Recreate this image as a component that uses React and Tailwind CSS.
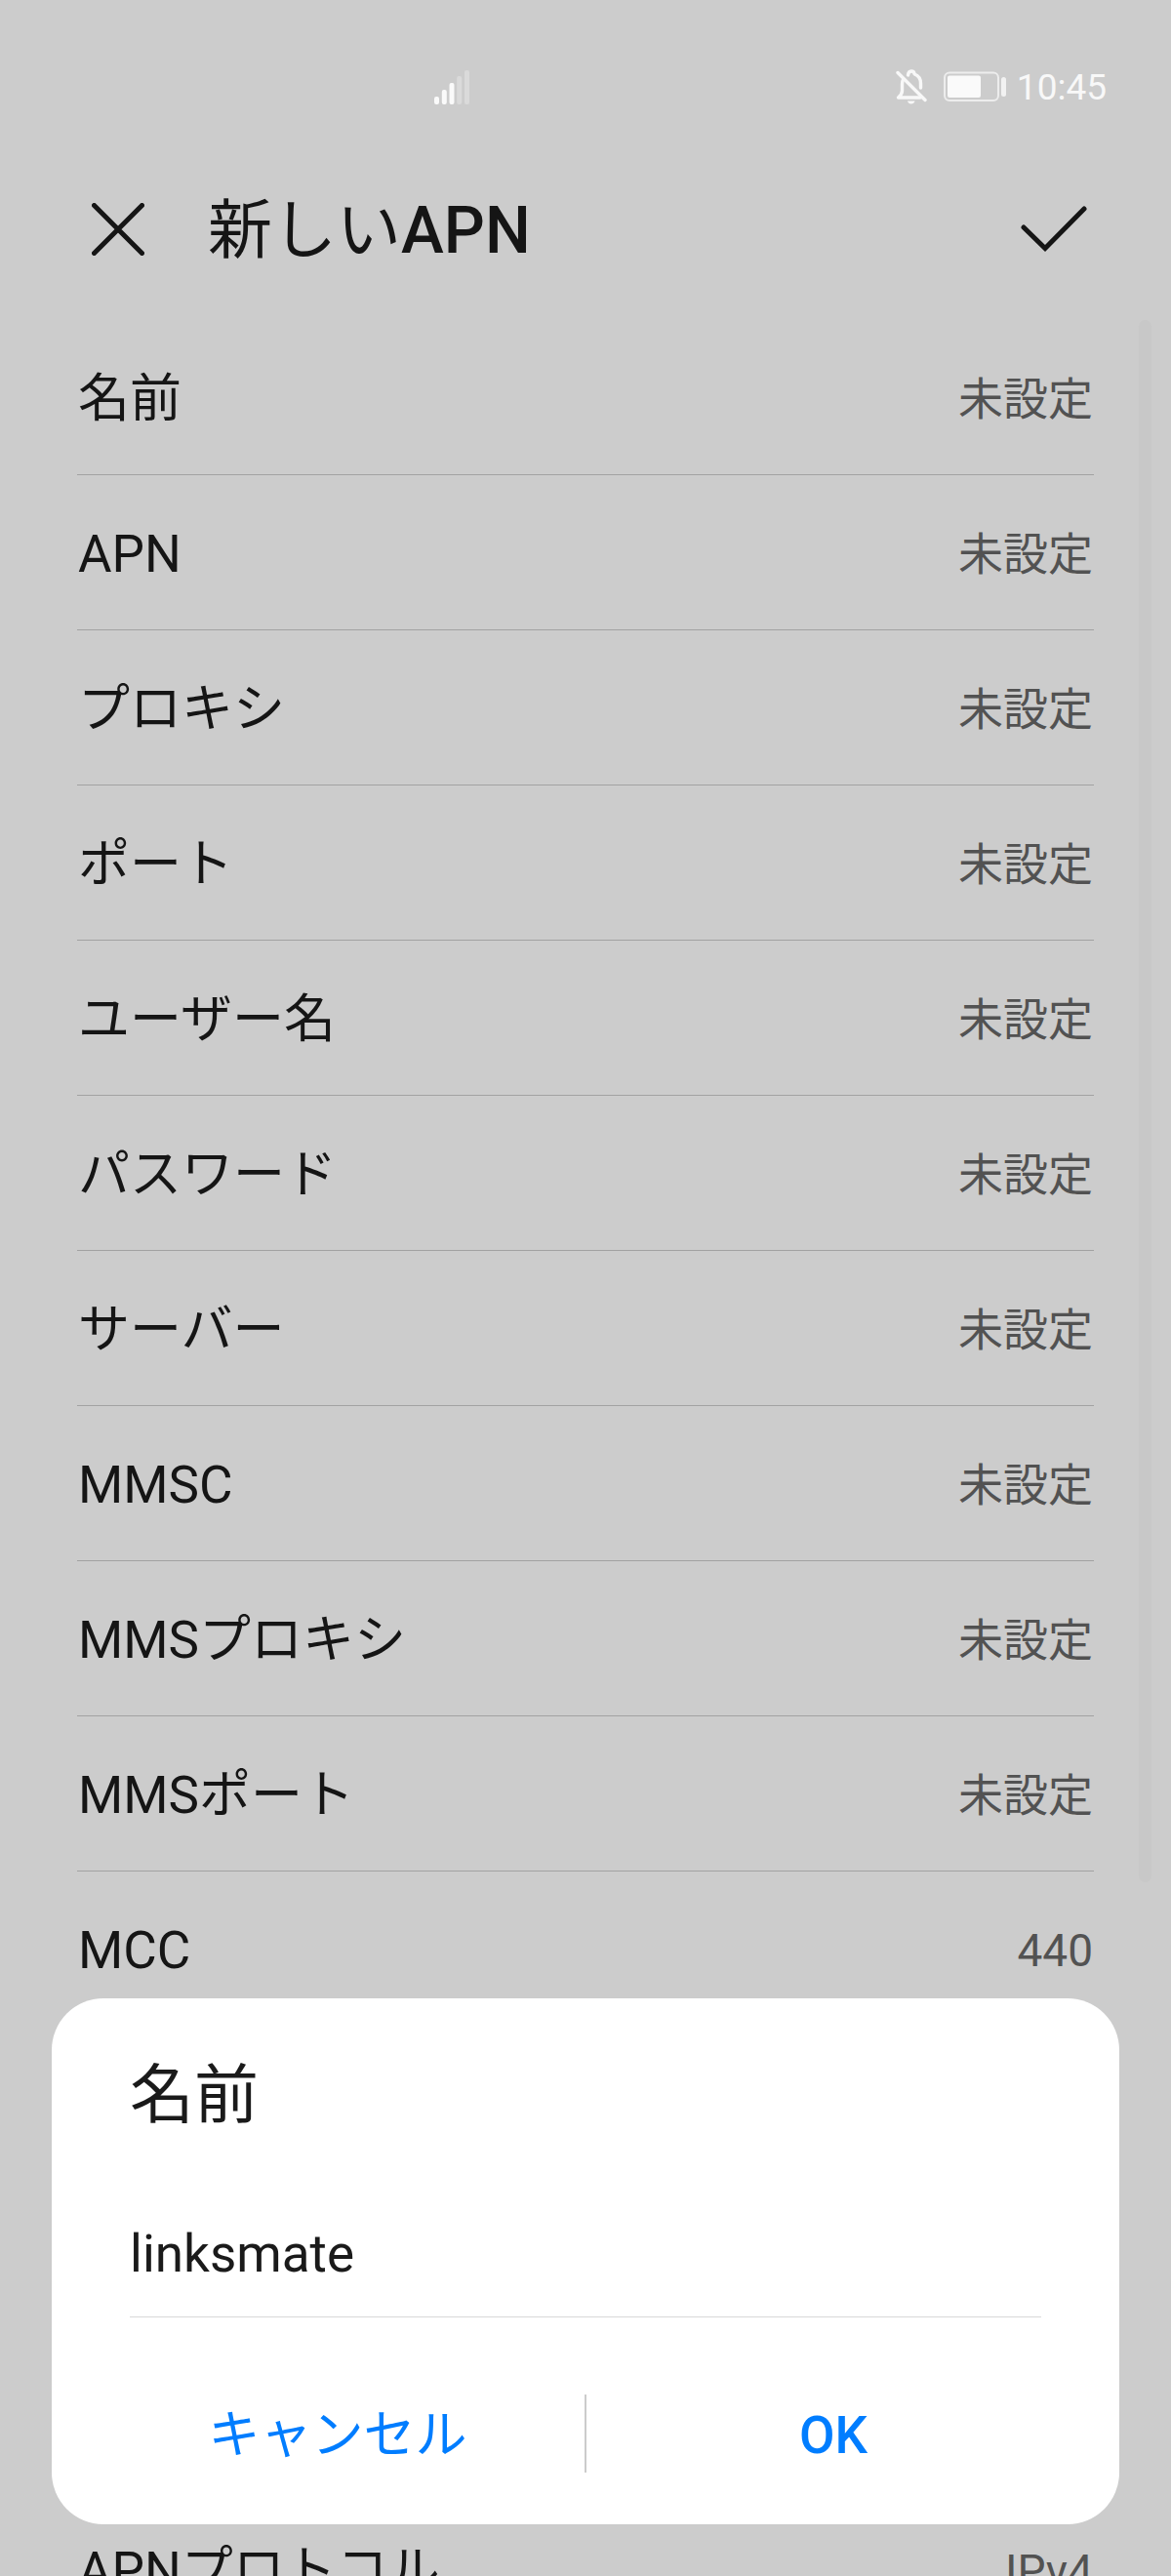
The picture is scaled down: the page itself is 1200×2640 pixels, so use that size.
// APN editor: settings list with the "name" prompt open on top.

import { useState } from "react";

const UNSET = "未設定";

const settings = [
  { label: "名前", value: UNSET },
  { label: "APN", value: UNSET },
  { label: "プロキシ", value: UNSET },
  { label: "ポート", value: UNSET },
  { label: "ユーザー名", value: UNSET },
  { label: "パスワード", value: UNSET },
  { label: "サーバー", value: UNSET },
  { label: "MMSC", value: UNSET },
  { label: "MMSプロキシ", value: UNSET },
  { label: "MMSポート", value: UNSET },
  { label: "MCC", value: "440" },
  { label: "MNC", value: "10" },
  { label: "認証タイプ", value: UNSET },
  { label: "APNタイプ", value: UNSET },
  { label: "APNプロトコル", value: "IPv4" },
];

function SignalIcon() {
  return (
    <svg width="36" height="36" viewBox="0 0 36 36" fill="#fafafa" aria-hidden="true">
      <rect x="0" y="28" width="5" height="8" rx="2" />
      <rect x="7.8" y="21" width="5" height="15" rx="2" />
      <rect x="15.5" y="14" width="5" height="22" rx="2" />
      <rect x="23.2" y="7" width="5" height="29" rx="2" fill="#dadada" />
      <rect x="31" y="1" width="5" height="35" rx="2" fill="#dadada" />
    </svg>
  );
}

function BellOffIcon() {
  return (
    <svg width="32" height="36" viewBox="0 0 32 36" fill="none" aria-hidden="true">
      <g stroke="#f8f8f8" strokeWidth="3.4" strokeLinecap="round" strokeLinejoin="round">
        <path d="M2 3.5 30 31.5" />
        <path d="M25 29H2.5c3-2.500 4-4 4-7V15c0-2 .4-3.500 1.200-5" />
        <path d="M12.500 6C13 .8 18.500.8 19.200 5c4.300 1.600 6.300 5 6.300 9.500v4.500" />
      </g>
      <path d="M12 32.500h7.500c-.8 4-6.700 4-7.500 0z" fill="#f8f8f8" />
    </svg>
  );
}

function BatteryIcon() {
  return (
    <svg width="64" height="32" viewBox="0 0 64 32" fill="none" aria-hidden="true">
      <rect x="1" y="1.500" width="55" height="28.500" rx="5" stroke="#ededed" strokeWidth="2" />
      <rect x="4" y="4.500" width="34" height="22.500" rx="2" fill="#fafafa" />
      <rect x="59" y="6" width="5" height="20" rx="2.500" fill="#f2f2f2" />
    </svg>
  );
}

function StatusBar() {
  return (
    <div className="flex h-[178px] items-center pr-[66px] pl-[445px] text-[37px] leading-none text-[#f8f8f8]">
      <SignalIcon />
      <div className="ml-auto flex items-center">
        <BellOffIcon />
        <div className="ml-[17px]">
          <BatteryIcon />
        </div>
        <span className="ml-[11px]">10:45</span>
      </div>
    </div>
  );
}

function Header() {
  return (
    <header className="flex h-[150px] items-start pr-[86px] pl-[94px]">
      <div className="flex h-[114px] grow items-center">
        <button type="button" aria-label="閉じる">
          <svg width="54" height="54" viewBox="0 0 54 54" fill="none" stroke="#151515" strokeWidth="5" strokeLinecap="round">
            <path d="M2.500 2.500l49 49M51.500 2.500l-49 49" />
          </svg>
        </button>
        <h1 className="ml-[65px] pt-1 text-[66px] leading-none">
          新しい<span className="font-medium">APN</span>
        </h1>
        <button type="button" aria-label="保存" className="ml-auto">
          <svg width="68" height="48" viewBox="0 0 68 48" fill="none" stroke="#151515" strokeWidth="5" strokeLinecap="round" strokeLinejoin="miter">
            <path d="M3 22l22 21.500L65 3" />
          </svg>
        </button>
      </div>
    </header>
  );
}

function SettingRow({ label, value }) {
  return (
    <li className="border-b border-[#a2a2a2]">
      <button type="button" className="flex h-[158px] w-full items-center justify-between px-px pt-1 text-left">
        <span className="text-[53px] leading-none">{label}</span>
        <span className="text-[46px] leading-none text-[#525252]">{value}</span>
      </button>
    </li>
  );
}

function NameDialog() {
  const [name, setName] = useState("linksmate");

  return (
    <form
      role="dialog"
      aria-labelledby="dialog-title"
      className="absolute inset-x-[53px] bottom-[53px] rounded-[53px] bg-white px-20 pt-[66px] pb-[53px] text-[#1a1a1a]"
      onSubmit={(e) => e.preventDefault()}
    >
      <label id="dialog-title" htmlFor="apn-name" className="block text-[66px] leading-[68px]">
        名前
      </label>
      <input
        id="apn-name"
        type="text"
        value={name}
        onChange={(e) => setName(e.target.value)}
        className="mt-16 block h-[129px] w-full border-b border-[#d9d9d9] text-[53px] outline-none"
      />
      <div className="-mx-10 mt-[79px] flex h-20 items-center text-[53px] leading-none text-[#007dff]">
        <button type="button" className="h-full flex-1 pt-1">
          キャンセル
        </button>
        <div className="h-full w-[2px] bg-[#cccccc]" />
        <button type="submit" className="h-full flex-1 pt-1 font-medium">
          OK
        </button>
      </div>
    </form>
  );
}

export default function App() {
  return (
    <div
      lang="ja"
      className="relative flex h-screen flex-col overflow-hidden bg-[#cccccc] font-[Roboto,'Noto_Sans_CJK_JP',sans-serif] text-[#151515]"
    >
      <StatusBar />
      <Header />

      <main className="relative min-h-0 flex-1 overflow-hidden">
        <ul className="px-[79px]">
          {settings.map((item) => (
            <SettingRow key={item.label} {...item} />
          ))}
        </ul>
        {/* Scroll thumb */}
        <div className="absolute top-0 right-5 bottom-[711px] w-[13px] rounded-full bg-[#c8c8c8]" />
      </main>

      <NameDialog />
    </div>
  );
}
